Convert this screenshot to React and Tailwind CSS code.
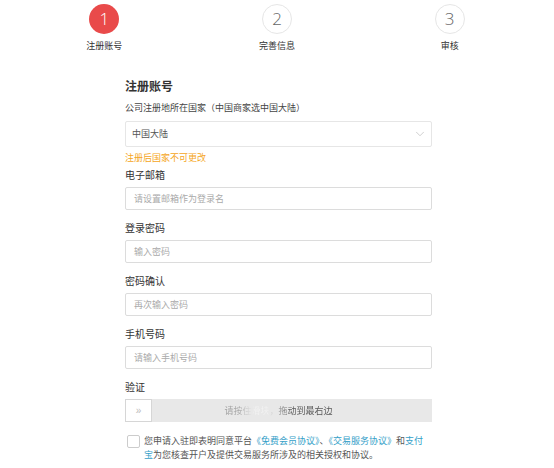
import { ChevronDown } from 'lucide-react'

const steps = [
  { n: 1, label: '注册账号', active: true },
  { n: 2, label: '完善信息' },
  { n: 3, label: '审核' },
]

const fields = [
  { label: '电子邮箱', placeholder: '请设置邮箱作为登录名' },
  { label: '登录密码', placeholder: '输入密码' },
  { label: '密码确认', placeholder: '再次输入密码' },
  { label: '手机号码', placeholder: '请输入手机号码' },
]

function Field({ label, placeholder, first }) {
  return (
    <div className={first ? 'mt-[4px]' : 'mt-[11px]'}>
      <div className="h-[14px] text-[10px] leading-[14px] text-[#333]">{label}</div>
      <div className="mt-[5px] h-[23px] border border-[#dcdcdc] rounded-[2px] flex items-center pl-[8px] text-[9px] text-[#aaa]">
        {placeholder}
      </div>
    </div>
  )
}

export default function App() {
  return (
    <div className="w-[554px] h-[468px] bg-white overflow-hidden font-['Noto_Sans_CJK_SC','Noto_Sans',sans-serif]">
      <div className="flex px-[18px] pt-[4px]">
        {steps.map((s) => (
          <div key={s.n} className="flex-1 flex flex-col items-center">
            <div
              className={`w-[30px] h-[30px] rounded-full flex items-center justify-center text-[17px] font-light font-['Open_Sans',sans-serif] ${
                s.active ? 'bg-[#e94a4a] text-white' : 'border border-[#e6e6e6] text-[#666]'
              }`}
            >
              {s.n}
            </div>
            <div className="mt-[6px] text-[9px] leading-[12px] text-[#333]">{s.label}</div>
          </div>
        ))}
      </div>

      <div className="ml-[125px] w-[307px] mt-[26px]">
        <div className="text-[12px] leading-[16px] font-bold text-[#333]">注册账号</div>
        <div className="mt-[7px] h-[14px] text-[9px] leading-[14px] text-[#444]">公司注册地所在国家（中国商家选中国大陆）</div>
        <div className="mt-[6px] h-[26px] border border-[#e6e6e6] rounded-[2px] flex items-center justify-between pl-[6px] pr-[4px] text-[9px] text-[#555]">
          <span>中国大陆</span>
          <ChevronDown size={14} strokeWidth={1.2} className="text-[#bbb]" />
        </div>
        <div className="mt-[5px] h-[12px] text-[9px] leading-[12px] text-[#f5a623]">注册后国家不可更改</div>

        {fields.map((f, i) => (
          <Field key={f.label} label={f.label} placeholder={f.placeholder} first={i === 0} />
        ))}

        <div className="mt-[11px] h-[14px] text-[10px] leading-[14px] text-[#333]">验证</div>
        <div className="relative mt-[5px] h-[23px] flex items-center justify-center bg-[#e8e8e8]">
          <span className="text-[9px] bg-[linear-gradient(to_right,#999_0%,#aaa_14%,#f2f2f2_28%,#f2f2f2_40%,#999_52%,#555_62%,#555_100%)] bg-clip-text text-transparent">
            请按住滑块，拖动到最右边
          </span>
          <div className="absolute left-0 top-0 w-[27px] h-full bg-white border border-[#d6d6d6] flex items-center justify-center text-[10px] text-[#bbb] font-['Liberation_Sans',sans-serif]">
            »
          </div>
        </div>

        <div className="mt-[12px] flex">
          <div className="mt-[1px] ml-[2px] w-[13px] h-[13px] shrink-0 border border-[#ccc] rounded-[2px] bg-white" />
          <p className="ml-[4px] text-[9px] leading-[14px] text-[#555]">
            您申请入驻即表明同意平台<span className="text-[#34a0c8]">《免费会员协议》</span>、<span className="text-[#34a0c8]">《交易服务协议》</span>和<span className="text-[#34a0c8]">支付</span><span className="text-[#34a0c8]">宝</span>为您核查开户及提供交易服务所涉及的相关授权和协议。
          </p>
        </div>
      </div>
    </div>
  )
}
